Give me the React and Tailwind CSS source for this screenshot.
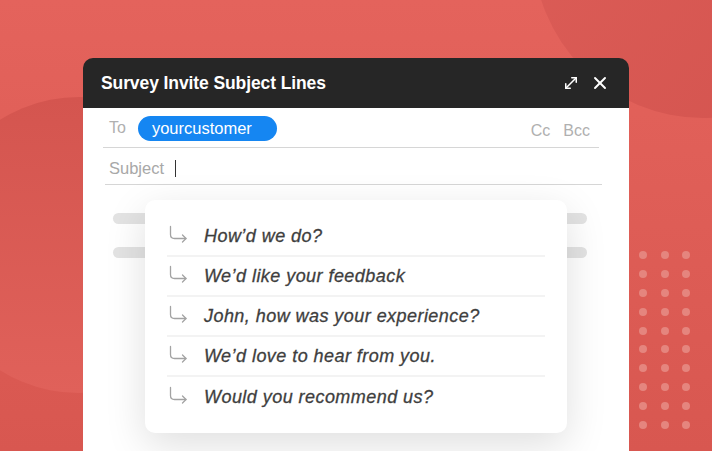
import { X, MoveDiagonal } from "lucide-react";

const subjectLines = [
  "How’d we do?",
  "We’d like your feedback",
  "John, how was your experience?",
  "We’d love to hear from you.",
  "Would you recommend us?",
];

const dotRows = Array.from({ length: 10 });

function ReplyArrow() {
  return (
    <svg width="20" height="18" viewBox="0 0 20 18" fill="none" stroke="#a3a3a3" strokeWidth="1.3" strokeLinecap="round" strokeLinejoin="round">
      <path d="M2.5 1.5V9.5Q2.5 13.5 6.5 13.5H18" />
      <path d="M14.5 10L18 13.5L14.5 17" />
    </svg>
  );
}

export default function App() {
  return (
    <div className="relative h-[451px] w-[712px] overflow-hidden bg-gradient-to-b from-[#e4635c] to-[#d85750] font-['Liberation_Sans',Arial,sans-serif]">
      {/* background shapes */}
      <div className="absolute left-[-69px] top-[97px] h-[296px] w-[296px] rounded-full bg-gradient-to-b from-[#d4554f] to-[#e0615a]" />
      <div className="absolute left-[533px] top-[-222px] h-[340px] w-[340px] rounded-full bg-gradient-to-br from-[#de5f59] to-[#d3534e]" />
      <div className="absolute left-[639px] top-[251px] grid grid-cols-3 gap-x-[13.5px] gap-y-[10.9px]">
        {dotRows.map((_, r) =>
          [0, 1, 2].map((c) => <span key={`${r}-${c}`} className="block h-[8px] w-[8px] rounded-full bg-[#e5857e]" />)
        )}
      </div>

      <div className="relative ml-[83px] mt-[58px] w-[546px]">
        <div className="flex h-[50px] items-center justify-between rounded-t-[10px] bg-[#262626] pl-[18px] pr-[19px]">
          <h1 className="text-[17.5px] font-bold tracking-[-0.1px] text-white">Survey Invite Subject Lines</h1>
          <div className="flex items-center gap-[10px] text-white">
            <MoveDiagonal size={18} strokeWidth={2} />
            <X size={20} strokeWidth={2.3} />
          </div>
        </div>

        <div className="relative h-[400px] bg-white">
          <div className="ml-[20px] mr-[30px] flex h-[40px] items-center border-b border-[#d6d6d6] pl-[6px] pr-[9px] text-[16px] text-[#b0b0b0]">
            <span className="mt-[1px]">To</span>
            <span className="ml-[12px] mt-[1px] flex h-[25px] w-[139px] items-center rounded-full bg-[#1586f2] pl-[14px] text-[16.5px] text-white">
              yourcustomer
            </span>
            <span className="ml-auto mt-[7px]">Cc</span>
            <span className="ml-[13px] mt-[7px]">Bcc</span>
          </div>
          <div className="ml-[22px] mr-[27px] flex h-[37px] items-center border-b border-[#d6d6d6] pl-[4px] pt-[5px] text-[16.5px] text-[#a8a8a8]">
            <span>Subject</span>
            <span className="ml-[11px] h-[17px] w-px bg-[#333]" />
          </div>

          <div className="ml-[30px] mr-[42px] mt-[28px] h-[11px] rounded-full bg-[#e3e3e3]" />
          <div className="ml-[30px] mr-[42px] mt-[23px] h-[11px] rounded-full bg-[#e3e3e3]" />

          <div className="absolute left-[62px] top-[92px] w-[422px] rounded-[10px] bg-white px-[22px] pb-[16px] pt-[17px] shadow-[0_12px_40px_rgba(0,0,0,0.13)]">
            {subjectLines.map((line, i) => (
              <div
                key={line}
                className={`flex h-[40px] items-center ${i < subjectLines.length - 1 ? "border-b-2 border-[#f3f3f3]" : ""}`}
              >
                <span className="ml-[1px] mt-[-4px]">
                  <ReplyArrow />
                </span>
                <span className="ml-[16px] text-[18px] italic tracking-[0.45px] text-[#3e3e3e] [-webkit-text-stroke:0.3px_#3e3e3e]">
                  {line}
                </span>
              </div>
            ))}
          </div>
        </div>
      </div>
    </div>
  );
}
